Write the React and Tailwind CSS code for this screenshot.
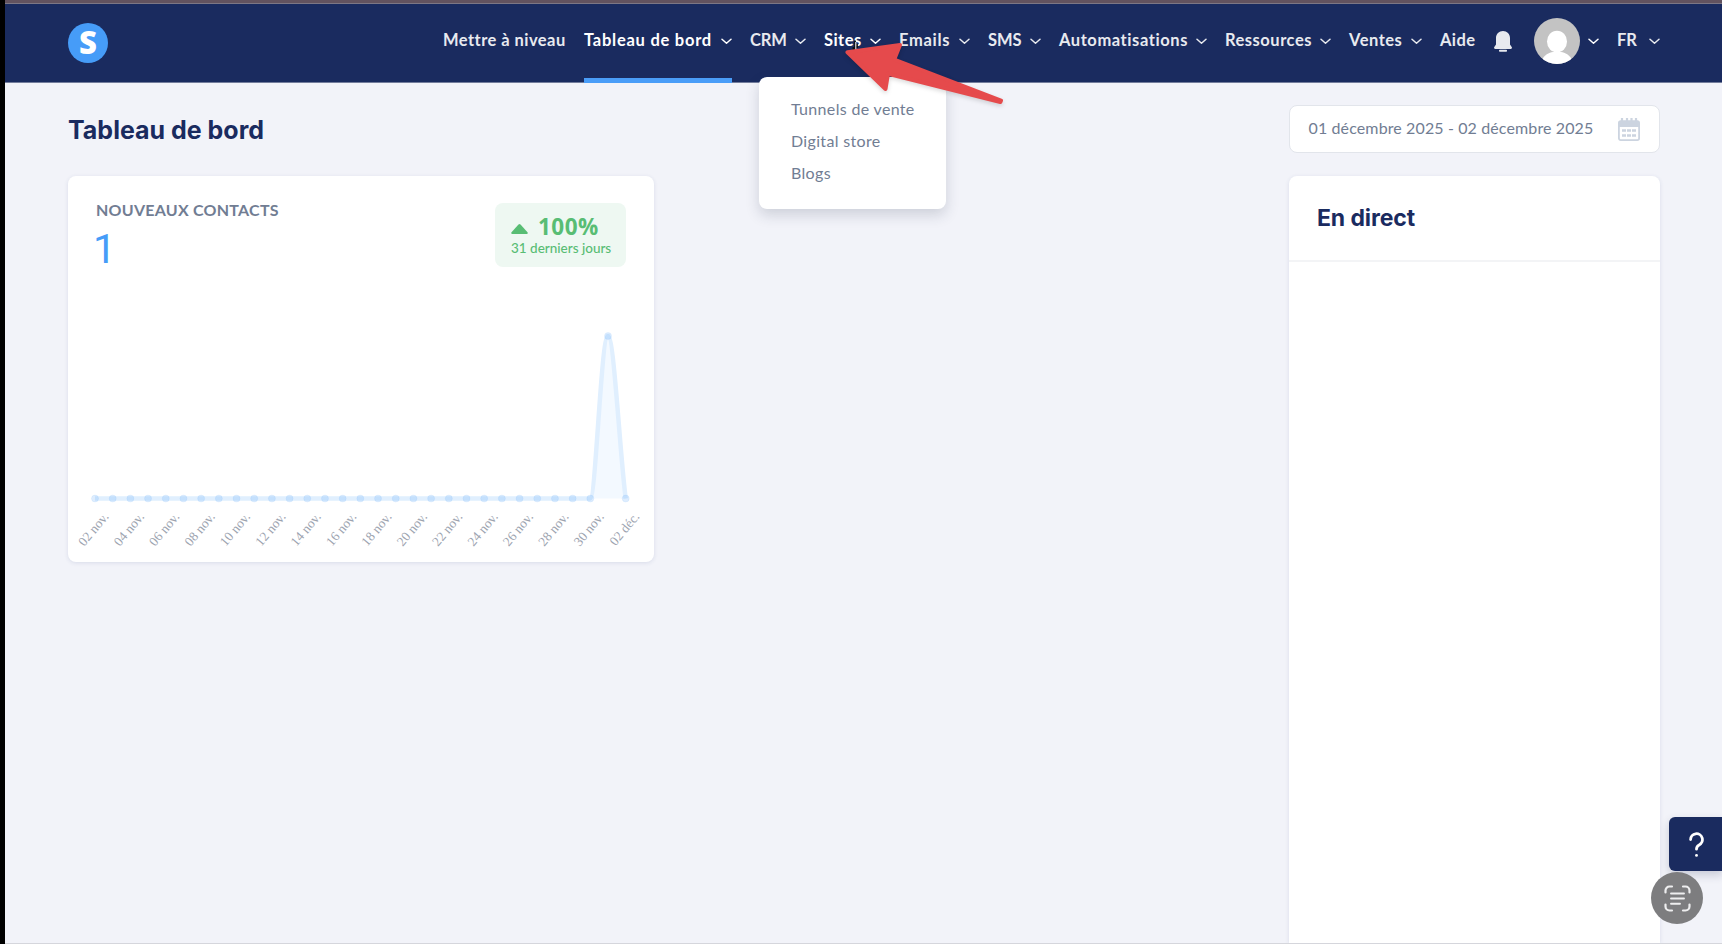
import React from 'react';

const navItems = [
    { label: 'Mettre à niveau', box: 'w-[123px] mr-[18px]', tracking: 'tracking-[0.45px]' },
    { label: 'Tableau de bord', box: 'w-[148px] mr-[18px]', tracking: 'tracking-[0.75px]', active: true, underline: true, menu: true },
    { label: 'CRM', box: 'w-[56px] mr-[18px]', tracking: 'tracking-[-0.1px]', menu: true },
    { label: 'Sites', box: 'w-[57px] mr-[18px]', tracking: 'tracking-[0.45px]', active: true, menu: true },
    { label: 'Emails', box: 'w-[71px] mr-[18px]', tracking: 'tracking-[0.7px]', menu: true },
    { label: 'SMS', box: 'w-[53px] mr-[18px]', tracking: 'tracking-[-0.1px]', menu: true },
    { label: 'Automatisations', box: 'w-[148px] mr-[18px]', tracking: 'tracking-[0.57px]', menu: true },
    { label: 'Ressources', box: 'w-[106px] mr-[18px]', tracking: 'tracking-[0.5px]', menu: true },
    { label: 'Ventes', box: 'w-[73px] mr-[18px]', tracking: 'tracking-[0.5px]', menu: true },
    { label: 'Aide', box: 'w-[36px] mr-[18px]', tracking: 'tracking-[0.4px]' },
];

const siteLinks = ['Tunnels de vente', 'Digital store', 'Blogs'];

const points = Array.from({ length: 31 }, (_, i) => ({
    x: 27 + i * 17.69,
    y: i === 29 ? 160 : 322.5,
}));

const dateLabels = [
    '02 nov.', '04 nov.', '06 nov.', '08 nov.', '10 nov.', '12 nov.', '14 nov.', '16 nov.',
    '18 nov.', '20 nov.', '22 nov.', '24 nov.', '26 nov.', '28 nov.', '30 nov.', '02 déc.',
];

const Chevron = () => (
    <svg className="w-[11px] h-[7px] shrink-0" viewBox="0 0 11 7" fill="none" stroke="currentColor" strokeWidth="1.5" strokeLinecap="round" strokeLinejoin="round">
        <path d="M1 1.2 5.5 5.2 10 1.2" />
    </svg>
);

const NavItem = ({ item }) => (
    <a className={`relative h-[74px] flex items-center justify-between shrink-0 whitespace-nowrap ${item.box} ${item.active ? 'text-white' : 'text-[#e8eaef]'}`}>
        <span className={`pb-[2px] ${item.tracking}`}>{item.label}</span>
        {item.menu && <Chevron />}
        {item.underline && <span className="absolute left-0 -bottom-[5px] w-full h-[5px] bg-[#4a9df8]" />}
    </a>
);

const Header = () => (
    <header className="h-[79px] bg-[#1a2b5f] border-b border-[#737d9c] flex items-start pl-[63px] pr-[62px] font-bold text-[16.5px]">
        <div className="w-10 h-10 mt-[19px] rounded-full bg-[#469cf8] flex items-center justify-center text-white text-[31px] leading-none font-extrabold font-['Open_Sans',sans-serif]">
            <span className="-mt-[2px]">S</span>
        </div>
        <nav className="ml-auto flex">
            {navItems.map(item => <NavItem key={item.label} item={item} />)}
            <svg className="w-[18px] h-[21px] mt-[27px] mr-[22px]" viewBox="0 0 18 21" fill="#e8eaef">
                <path d="M9 0c4 0 7 3 7 7v6.5l1.7 2.4c.6.9.2 2.1-1 2.1H1.3c-1.2 0-1.6-1.2-1-2.1L2 13.5V7c0-4 3-7 7-7z" />
                <rect x="5" y="18.8" width="8" height="1.9" rx=".8" />
            </svg>
            <svg className="w-[46px] h-[46px] mt-[14px]" viewBox="0 0 46 46">
                <defs>
                    <clipPath id="avatar"><circle cx="23" cy="23" r="23" /></clipPath>
                </defs>
                <g clipPath="url(#avatar)">
                    <rect width="46" height="46" fill="#c3c3c3" />
                    <ellipse cx="23" cy="23.5" rx="10" ry="10.8" fill="#fff" />
                    <path d="M8 42c2-5 7-7.500 11-8h8c4 .5 9 3 11 8v5H8z" fill="#fff" />
                </g>
            </svg>
            <span className="ml-[8px] mr-[18px] mt-[34px] h-[7px] flex text-white"><Chevron /></span>
            <a className="h-[74px] w-[43px] flex items-center justify-between text-[#e8eaef]">
                <span className="pb-[2px]">FR</span>
                <Chevron />
            </a>
        </nav>
    </header>
);

const SitesMenu = () => (
    <div className="absolute left-[759px] top-[77px] w-[187px] h-[132px] rounded-lg bg-white shadow-[0_6px_14px_rgba(40,50,80,0.18)] pl-8 pt-[16px] text-[16px] tracking-[0.33px] text-[#717d93]">
        {siteLinks.map(link => <a key={link} className="block leading-8">{link}</a>)}
    </div>
);

const ContactsChart = () => (
    <svg className="absolute left-0 top-0 w-[586px] h-[386px]" viewBox="0 0 586 386">
        <defs>
            <clipPath id="ticks"><rect x="0" y="340" width="586" height="46" /></clipPath>
        </defs>
        <path d="M522.3 322.5C528 322.5 533 160 540 160C546 160 552 280 557.7 322.5z" fill="#f3f9ff" />
        <path d="M27 322.5H522C528 322.5 533 160 540 160C546 160 552 280 557.7 322.5" fill="none" stroke="#e0effe" strokeWidth="4.5" strokeLinejoin="round" />
        {points.map(p => (
            <circle key={p.x} cx={p.x} cy={p.y} r="3.5" fill="#469cf8" fillOpacity="0.18" stroke="#469cf8" strokeOpacity="0.08" />
        ))}
        <g clipPath="url(#ticks)" fill="#9ca3af" fontSize="13.3" fontFamily="Liberation Serif, serif" textAnchor="end">
            {dateLabels.map((label, i) => (
                <text key={label} transform={`translate(${41.4 + i * 35.38} 341) rotate(-50)`}>{label}</text>
            ))}
        </g>
    </svg>
);

const ContactsCard = () => (
    <section className="relative w-[586px] h-[386px] mt-[30px] rounded-lg bg-white shadow-[0_1px_4px_rgba(40,60,120,0.12)] pt-[27px] pl-[28px] pr-[28px]">
        <div className="flex justify-between">
            <div>
                <h2 className="text-[16px] leading-4 -mt-px font-bold tracking-[0.25px] text-[#717d93]">NOUVEAUX CONTACTS</h2>
                <p className="font-['Roboto',sans-serif] text-[41px] leading-[44px] mt-[9px] -ml-[3px] text-[#469cf8]">1</p>
            </div>
            <div className="w-[131px] h-16 rounded-lg bg-[#eef8f2] text-[#58bd74] pl-4 pt-[13px]">
                <div className="flex items-center h-6">
                    <svg className="w-[17px] h-[10px] mr-[10px] mt-px" viewBox="0 0 17 10" fill="currentColor">
                        <path d="M7.5.5a1.500 1.500 0 0 1 2 0l7 7.800c.5.600.1 1.700-.8 1.700H1.300c-.9 0-1.300-1.100-.8-1.700z" />
                    </svg>
                    <span className="font-['Open_Sans',sans-serif] text-[22.5px] font-bold tracking-[0.5px] leading-6 -mt-[2px]">100%</span>
                </div>
                <p className="text-[13.5px] leading-4 whitespace-nowrap font-medium">31 derniers jours</p>
            </div>
        </div>
        <ContactsChart />
    </section>
);

const CalendarIcon = () => (
    <svg className="w-[22px] h-[23px]" viewBox="0 0 22 23">
        <path d="M4 0v4M9 0v4M13.500 0v4M18 0v4" stroke="#ccd4e0" strokeWidth="2.2" />
        <rect x=".9" y="3.4" width="20.2" height="18.7" rx="1.8" fill="#fff" stroke="#ccd4e0" strokeWidth="1.8" />
        <path d="M.5 4a1.500 1.500 0 0 1 1.500-1.500h18A1.500 1.500 0 0 1 21.500 4v5H.5z" fill="#ccd4e0" />
        <path d="M4 12.500h14M4 17.500h14" stroke="#ccd4e0" strokeWidth="2.4" strokeDasharray="4 1" />
    </svg>
);

const LivePanel = () => (
    <aside className="w-[371px] h-[860px] flex flex-col pt-[22px] shrink-0">
        <div className="h-[48px] rounded-lg bg-white border border-[#e2e5eb] flex items-center justify-between pl-[18.5px] pr-[19px] text-[#717d93]">
            <span className="text-[16px] tracking-[0.12px] whitespace-nowrap pb-[2px]">01 décembre 2025 - 02 décembre 2025</span>
            <CalendarIcon />
        </div>
        <section className="grow mt-[23px] rounded-t-lg bg-white shadow-[0_1px_4px_rgba(40,60,120,0.12)]">
            <h2 className="h-[86px] pl-[28px] border-b-2 border-[#f3f4f6] flex items-center font-['Inter',sans-serif] font-bold text-[23px] tracking-[-0.1px] text-[#1a2b5f]">
                En direct
            </h2>
        </section>
    </aside>
);

const Arrow = () => (
    <svg className="absolute left-[840px] top-[36px] w-[172px] h-[78px] drop-shadow-[0_2px_2px_rgba(0,0,0,0.15)]" viewBox="0 0 172 78" fill="#e54a4c" stroke="#e54a4c" strokeWidth="4" strokeLinejoin="round">
        <path d="M7.500 16.200 60 9l-5.800 14.500L161 64.500l-.6 1.500L48 37.800 45.500 53z" />
    </svg>
);

const Cursor = () => (
    <svg className="absolute left-[850px] top-[39px] w-[12px] h-[12px]" viewBox="0 0 12 12">
        <path d="M3.500 8v3M5 1.500v9M7 5v4" stroke="#111" strokeWidth="1.8" />
        <path d="M5.800 3v8" stroke="#fff" strokeWidth="1" />
    </svg>
);

const FloatingButtons = () => (
    <>
        <div className="absolute left-[1668.5px] top-[817px] w-[54px] h-[54px] rounded-l-md bg-[#1a2b5f] shadow-[0_4px_10px_rgba(30,40,80,0.2)] flex items-center pl-[20px]">
            <svg className="w-[15px] h-[25px]" viewBox="0 0 15 25" fill="none" stroke="#fff" strokeWidth="2.8" strokeLinecap="round">
                <path d="M1.600 7.500a5.900 5.900 0 1 1 8.500 5.400C8.200 13.900 7.500 14.500 7.500 17.200" />
                <path d="M7.500 23.300v.1" />
            </svg>
        </div>
        <div className="absolute left-[1651px] top-[872px] w-[52px] h-[52px] rounded-full bg-[#7d7d7f] flex items-center justify-center">
            <svg className="w-[27px] h-[27px]" viewBox="0 0 27 27" fill="none" stroke="#eeeeef" strokeWidth="2.2" strokeLinecap="round">
                <path d="M1.500 7.500v-2a4 4 0 0 1 4-4h2.500M19 1.500h2.500a4 4 0 0 1 4 4v2M25.500 19.500v2a4 4 0 0 1-4 4H19M8 25.500H5.500a4 4 0 0 1-4-4v-2" />
                <path d="M7 8.500h13M7 13.500h13M7 18.700h9" strokeWidth="1.9" />
            </svg>
        </div>
    </>
);

export default function App() {
    return (
        <div className="relative w-[1722px] h-[944px] overflow-hidden bg-[#f2f3f9] border-l-[5px] border-black font-['Lato',sans-serif]">
            <div className="h-1 bg-[#63535f] border-b border-[#7d7785]" />
            <Header />
            <main className="flex justify-between h-[859px] pl-[63px] pr-[62px]">
                <div className="pt-[31px]">
                    <h1 className="font-['Inter',sans-serif] font-bold text-[25px] leading-[32px] text-[#1a2b5f]">Tableau de bord</h1>
                    <ContactsCard />
                </div>
                <LivePanel />
            </main>
            <div className="absolute left-0 bottom-0 w-full h-px bg-[#d5d6dc]" />
            <div className="absolute -left-[5px] top-0">
                <SitesMenu />
                <Cursor />
                <Arrow />
                <FloatingButtons />
            </div>
        </div>
    );
}
